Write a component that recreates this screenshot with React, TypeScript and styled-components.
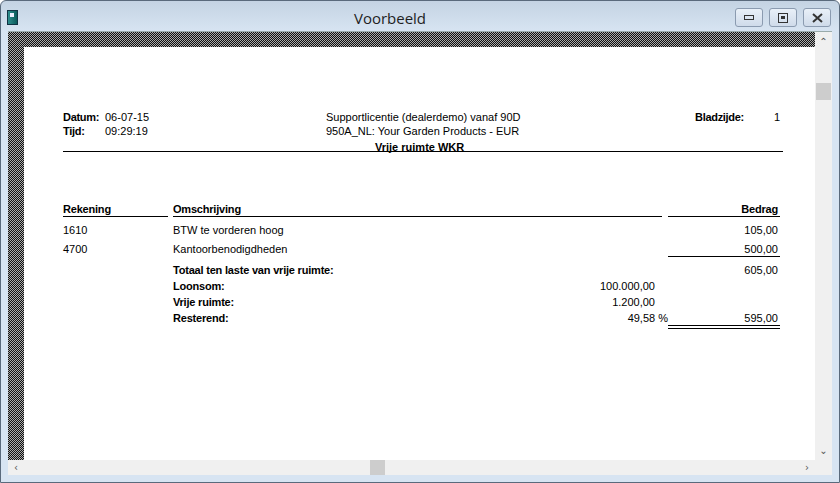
import React from "react";
import styled, { createGlobalStyle } from "styled-components";

const Global = createGlobalStyle`
  html, body { margin: 0; padding: 0; overflow: hidden; }
  body { font-family: "Liberation Sans", Arial, sans-serif; }
`;

const Win = styled.div`
  width: 840px; height: 483px; box-sizing: border-box;
  background: linear-gradient(#c4d3e3, #d7e4f2 30px, #d7e4f2);
  border: 1px solid #5a6a7c; border-radius: 6px 6px 0 0;
  display: flex; flex-direction: column;
`;
const TitleBar = styled.div`
  height: 30px; display: flex; align-items: center; position: relative;
  padding: 0 8px 0 6px;
`;
const Title = styled.div`
  position: absolute; left: 0; right: 60px; text-align: center; top: 7px;
  font-family: "Open Sans", "DejaVu Sans", sans-serif; font-size: 15px; color: #1e1e1e;
`;
const AppIcon = styled.div`
  width: 9px; height: 13px; margin-top: 2px;
  background: linear-gradient(90deg, #2f8d8d, #0b5b5b);
  border: 1px solid #134; position: relative;
  &::after { content: ""; position: absolute; left: 2px; top: 2px; width: 4px; height: 4px; background: #eef; }
`;
const Buttons = styled.div`margin-left: auto; display: flex; gap: 6px; margin-top: 3px;`;
const WBtn = styled.div`
  width: 26px; height: 17px; border: 1px solid #8b9bb0; border-radius: 3px;
  background: linear-gradient(#e9f0f8, #cfdbea); display: flex; align-items: center; justify-content: center;
`;
const Client = styled.div`
  margin: 0 7px; flex: 1; display: grid; grid-template-columns: 1fr 17px; grid-template-rows: 1fr 15px;
  background: #f0f0f0; border-top: 1px solid #9aa;
`;
const View = styled.div`
  background-color: #444;
  background-image: repeating-conic-gradient(#111 0 25%, #aaa 0 50%);
  background-size: 2px 2px;
  padding: 15px 0 0 16px; overflow: hidden;
`;
const Paper = styled.div`
  background: #fff; height: 100%; padding: 63px 0 0 39px; box-sizing: border-box;
  font-size: 11px; color: #000;
`;
const Content = styled.div`width: 720px;`;
const Head = styled.div`
  display: grid; grid-template-columns: 263px 369px 1fr; border-bottom: 1px solid #000;
  line-height: 14px; height: 41px;
`;
const Pair = styled.div`display: flex;`;
const Lbl = styled.span<{ w?: number }>`font-weight: bold; width: ${p => p.w ?? 42}px; letter-spacing: -0.3px;`;
const Center = styled.div``;
const CTitle = styled.div`font-weight: bold; padding-left: 49px; margin-top: 2px;`;
const Right = styled.div`display: flex; justify-content: space-between; padding-right: 3px;`;
const Table = styled.div`margin-top: 50px;`;
const Row = styled.div<{ h: number; mt?: number }>`
  display: grid; grid-template-columns: 105px 489px 113px; column-gap: 5px;
  height: ${p => p.h}px; line-height: 14px; margin-top: ${p => p.mt ?? 0}px;
  & > div:nth-child(3) { margin-left: 1px; }
`;
const Cell = styled.div<{ bold?: boolean; right?: boolean; line?: "single" | "double" }>`
  font-weight: ${p => (p.bold ? "bold" : "normal")};
  text-align: ${p => (p.right ? "right" : "left")};
  ${p => (p.right ? "padding-right: 2px;" : "")}
  border-bottom: ${p => (p.line === "single" ? "1px solid #000" : p.line === "double" ? "4px double #000" : "none")};
  height: 14px; box-sizing: content-box;
  ${p => (p.bold ? "letter-spacing: -0.2px;" : "")}
`;
const Mid = styled.div`display: flex; justify-content: space-between; padding-right: 7px;`;
const B = styled.span`font-weight: bold; letter-spacing: -0.2px;`;
const Pct = styled.span`margin-right: -13px;`;
const VScroll = styled.div`display: flex; flex-direction: column; align-items: center; padding-top: 4px; position: relative;`;
const VThumb = styled.div`position: absolute; top: 51px; left: 1px; width: 15px; height: 17px; background: #cdcdcd;`;
const HScroll = styled.div`position: relative; display: flex; align-items: center; justify-content: space-between; padding: 0 6px;`;
const HThumb = styled.div`position: absolute; left: 362px; top: 0; width: 15px; height: 15px; background: #cdcdcd;`;
const Arrow = styled.span`font-size: 10px; color: #555; font-family: "DejaVu Sans", sans-serif;`;
const Grip = styled.div``;

export default function App() {
  return (
    <Win>
      <Global />
      <TitleBar>
        <AppIcon />
        <Title>Voorbeeld</Title>
        <Buttons>
          <WBtn><svg width="10" height="6"><rect x="0.5" y="0.5" width="9" height="4" fill="none" stroke="#333" /></svg></WBtn>
          <WBtn><svg width="10" height="10"><rect x="0.5" y="0.5" width="9" height="9" fill="none" stroke="#333" /><rect x="3" y="3" width="4" height="3" fill="#333" /></svg></WBtn>
          <WBtn><svg width="11" height="10"><path d="M1 1L10 9M10 1L1 9" stroke="#333" strokeWidth="2" /></svg></WBtn>
        </Buttons>
      </TitleBar>
      <Client>
        <View>
          <Paper>
            <Content>
              <Head>
                <div>
                  <Pair><Lbl>Datum:</Lbl><span>06-07-15</span></Pair>
                  <Pair><Lbl>Tijd:</Lbl><span>09:29:19</span></Pair>
                </div>
                <Center>
                  <div>Supportlicentie (dealerdemo) vanaf 90D</div>
                  <div>950A_NL: Your Garden Products - EUR</div>
                  <CTitle>Vrije ruimte WKR</CTitle>
                </Center>
                <Right><Lbl w={60}>Bladzijde:</Lbl><span>1</span></Right>
              </Head>
              <Table>
                <Row h={15}>
                  <Cell bold line="single">Rekening</Cell>
                  <Cell bold line="single">Omschrijving</Cell>
                  <Cell bold right line="single">Bedrag</Cell>
                </Row>
                <Row h={19} mt={6}><Cell>1610</Cell><Cell>BTW te vorderen hoog</Cell><Cell right>105,00</Cell></Row>
                <Row h={15}><Cell>4700</Cell><Cell>Kantoorbenodigdheden</Cell><Cell right line="single">500,00</Cell></Row>
                <Row h={16} mt={6}><Cell /><Cell bold>Totaal ten laste van vrije ruimte:</Cell><Cell right>605,00</Cell></Row>
                <Row h={16}><Cell /><Mid><B>Loonsom:</B><span>100.000,00</span></Mid><Cell /></Row>
                <Row h={16}><Cell /><Mid><B>Vrije ruimte:</B><span>1.200,00</span></Mid><Cell /></Row>
                <Row h={18}><Cell /><Mid><B>Resterend:</B><Pct>49,58 %</Pct></Mid><Cell right line="double">595,00</Cell></Row>
              </Table>
            </Content>
          </Paper>
        </View>
        <VScroll>
          <Arrow>⌃</Arrow>
          <VThumb />
          <Arrow style={{ marginTop: "auto", marginBottom: 4 }}>⌄</Arrow>
        </VScroll>
        <HScroll>
          <Arrow>‹</Arrow>
          <HThumb />
          <Arrow>›</Arrow>
        </HScroll>
        <Grip />
      </Client>
      <div style={{ height: 7 }} />
    </Win>
  );
}
